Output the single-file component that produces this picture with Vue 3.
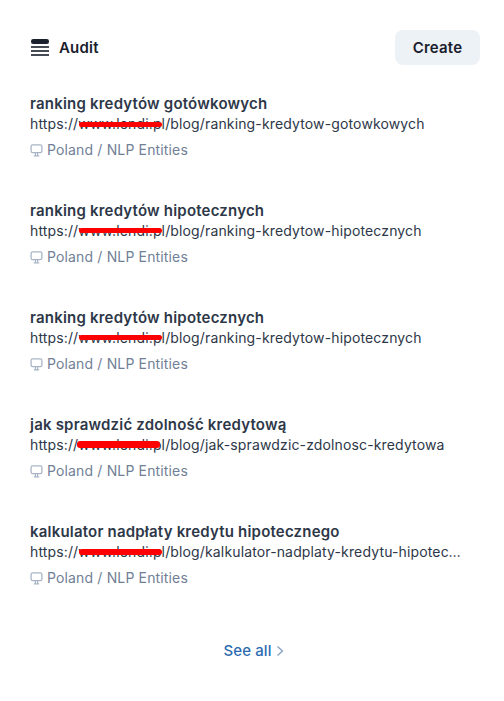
<script setup>
const rows = [
  { title: 'ranking kredytów gotówkowych', path: '/blog/ranking-kredytow-gotowkowych', mark: { top: '7px', height: '5px' } },
  { title: 'ranking kredytów hipotecznych', path: '/blog/ranking-kredytow-hipotecznych', mark: { top: '6px', height: '5px' } },
  { title: 'ranking kredytów hipotecznych', path: '/blog/ranking-kredytow-hipotecznych', mark: { top: '6px', height: '5px' } },
  { title: 'jak sprawdzić zdolność kredytową', path: '/blog/jak-sprawdzic-zdolnosc-kredytowa', mark: { top: '5px', height: '7px', left: '-1px', right: '5px' } },
  { title: 'kalkulator nadpłaty kredytu hipotecznego', path: '/blog/kalkulator-nadplaty-kredytu-hipotecznego', mark: { top: '6px', height: '6px' } },
]
</script>

<template>
  <main class="panel">
    <header class="head">
      <div class="brand">
        <svg class="stack" viewBox="0 0 18 18" width="18" height="18" aria-hidden="true">
          <rect x="0" y="0" width="18" height="5" rx="2.2" fill="#1a202c" />
          <rect x="0" y="7.2" width="18" height="1.6" fill="#1a202c" />
          <rect x="0" y="11.2" width="18" height="1.6" fill="#1a202c" />
          <rect x="0" y="15.2" width="18" height="1.6" fill="#1a202c" />
        </svg>
        <span class="brand-name">Audit</span>
      </div>
      <button class="create" type="button">Create</button>
    </header>

    <ul class="list">
      <li v-for="(row, i) in rows" :key="i" class="row">
        <div class="title">{{ row.title }}</div>
        <div class="url">https://<span class="host">www.lendi.pl<i class="mark" :style="row.mark"></i></span>{{ row.path }}</div>
        <div class="meta">
          <svg class="monitor" viewBox="0 0 12 12" width="13" height="13" fill="none" aria-hidden="true">
            <rect x="1" y="0.8" width="10" height="7.2" rx="1.6" stroke="#a9b5c6" stroke-width="1.2" />
            <path d="M3.5 11h5M5 8.2v2.6M7 8.2v2.6" stroke="#a9b5c6" stroke-width="1.1" />
          </svg>
          <span>Poland / NLP Entities</span>
        </div>
      </li>
    </ul>

    <a class="see-all">
      <span>See all</span>
      <svg viewBox="0 0 8 12" width="8" height="12" fill="none" aria-hidden="true">
        <path d="M1.5 1.5 6.5 6l-5 4.5" stroke="#7f9cc0" stroke-width="1.2" />
      </svg>
    </a>
  </main>
</template>

<style scoped>
.panel {
  width: 504px;
  height: 701px;
  box-sizing: border-box;
  padding: 30px 24px 0 30px;
  font-family: Inter, "Liberation Sans", sans-serif;
  color: #2d3748;
  background: #fff;
}
.head {
  display: flex;
  align-items: center;
  justify-content: space-between;
  height: 35px;
}
.brand {
  display: flex;
  align-items: center;
  gap: 10px;
}
.stack {
  display: block;
  margin: 1px 0 0 1px;
}
.brand-name {
  font-size: 15px;
  font-weight: 600;
  letter-spacing: 0.2px;
  color: #1a202c;
}
.create {
  width: 85px;
  height: 35px;
  border: 0;
  border-radius: 8px;
  background: #edf2f7;
  color: #1a202c;
  font: 600 15px Inter, "Liberation Sans", sans-serif;
  letter-spacing: 0.2px;
}
.list {
  list-style: none;
  margin: 0;
  padding: 29px 0 0;
}
.row {
  height: 107px;
}
.title {
  font-size: 15px;
  line-height: 20px;
  font-weight: 600;
  letter-spacing: 0.2px;
  color: #2d3748;
}
.url {
  width: 434px;
  font-size: 14px;
  line-height: 20px;
  letter-spacing: 0.14px;
  color: #2d3748;
  white-space: nowrap;
  overflow: hidden;
  text-overflow: ellipsis;
}
.host {
  position: relative;
}
.mark {
  position: absolute;
  left: 1px;
  right: 3px;
  border-radius: 3px;
  background: #f00;
}
.meta {
  display: flex;
  align-items: center;
  gap: 4px;
  margin-top: 6px;
  font-size: 14px;
  line-height: 20px;
  letter-spacing: 0.15px;
  color: #718096;
}
.monitor {
  display: block;
}
.see-all {
  display: flex;
  align-items: center;
  justify-content: center;
  gap: 4px;
  margin: 12px 0 0 -3px;
  font-size: 15px;
  line-height: 20px;
  font-weight: 500;
  letter-spacing: 0.1px;
  color: #2b6cb0;
}
</style>
